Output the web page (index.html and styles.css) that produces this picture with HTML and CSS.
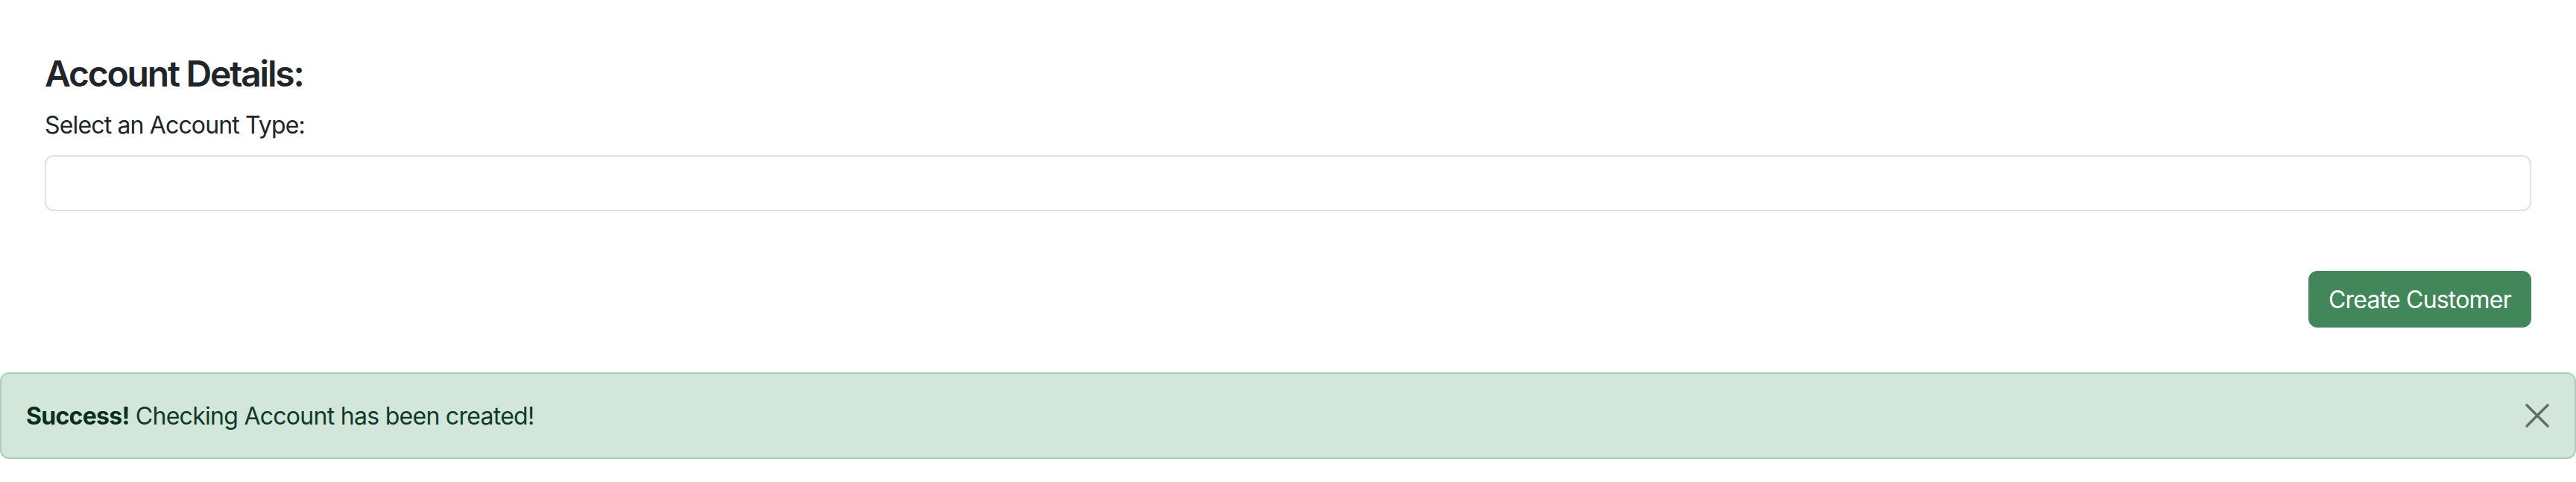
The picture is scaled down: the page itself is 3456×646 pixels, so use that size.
FILE: index.html
```html
<!DOCTYPE html>
<html lang="en">
<head>
<meta charset="utf-8">
<title>Account Details</title>
<link rel="stylesheet" href="styles.css">
</head>
<body>
<main class="page">
  <section class="form-area">
    <h4 class="section-title">Account Details:</h4>
    <label class="field-label" for="acct-type">Select an Account Type:</label>
    <div class="select-box" id="acct-type"></div>
    <div class="actions">
      <button class="btn-create" type="button">Create Customer</button>
    </div>
  </section>
  <div class="alert">
    <p class="alert-text"><strong>Success!</strong> Checking Account has been created!</p>
    <button class="alert-close" type="button" aria-label="Close">
      <svg width="32" height="32" viewBox="0 0 32 32" aria-hidden="true">
        <path d="M2 2 L30 30 M30 2 L2 30" stroke="currentColor" stroke-width="3.4" stroke-linecap="round" fill="none"/>
      </svg>
    </button>
  </div>
</main>
</body>
</html>
```

FILE: styles.css
```css
* { box-sizing: border-box; }
html, body { margin: 0; padding: 0; background: #ffffff; }
body {
  font-family: Inter, "Noto Sans", "Liberation Sans", sans-serif;
  font-size: 32px;
  line-height: 1.5;
  color: #212529;
}
.page {
  width: 100%;
}
.form-area {
  padding: 70px 60px 0 60px;
}
.section-title {
  margin: 0 0 16px 0;
  font-size: 48px;
  line-height: 1.2;
  font-weight: 600;
  letter-spacing: -2.2px;
}
.field-label {
  display: block;
  margin: 0 0 16px 0;
  font-size: 32px;
  line-height: 48px;
  letter-spacing: -0.85px;
}
.select-box {
  height: 75px;
  border: 2px solid #dee2e6;
  border-radius: 12px;
  background: #ffffff;
}
.actions {
  display: flex;
  justify-content: flex-end;
  padding-top: 80px;
}
.btn-create {
  height: 76px;
  width: 299px;
  padding: 2px 0 0 0;
  border: 2px solid #42875a;
  border-radius: 12px;
  background: #42875a;
  color: #ffffff;
  font-family: inherit;
  font-size: 32px;
  line-height: 48px;
  letter-spacing: -0.8px;
}
.alert {
  margin-top: 60px;
  height: 116px;
  display: flex;
  align-items: center;
  justify-content: space-between;
  padding: 0 34px 0 33px;
  background: #d3e6dc;
  border: 2px solid #a6cfbc;
  border-radius: 12px;
  color: #0f3a25;
}
.alert-text {
  margin: 0;
  padding-top: 2px;
  font-size: 32px;
  line-height: 48px;
  letter-spacing: -0.72px;
}
.alert-text strong { font-weight: 700; color: #0a301d; }
.alert-close {
  display: flex;
  padding: 0;
  border: 0;
  background: transparent;
  color: #616d67;
  width: 32px;
  height: 32px;
}
```
